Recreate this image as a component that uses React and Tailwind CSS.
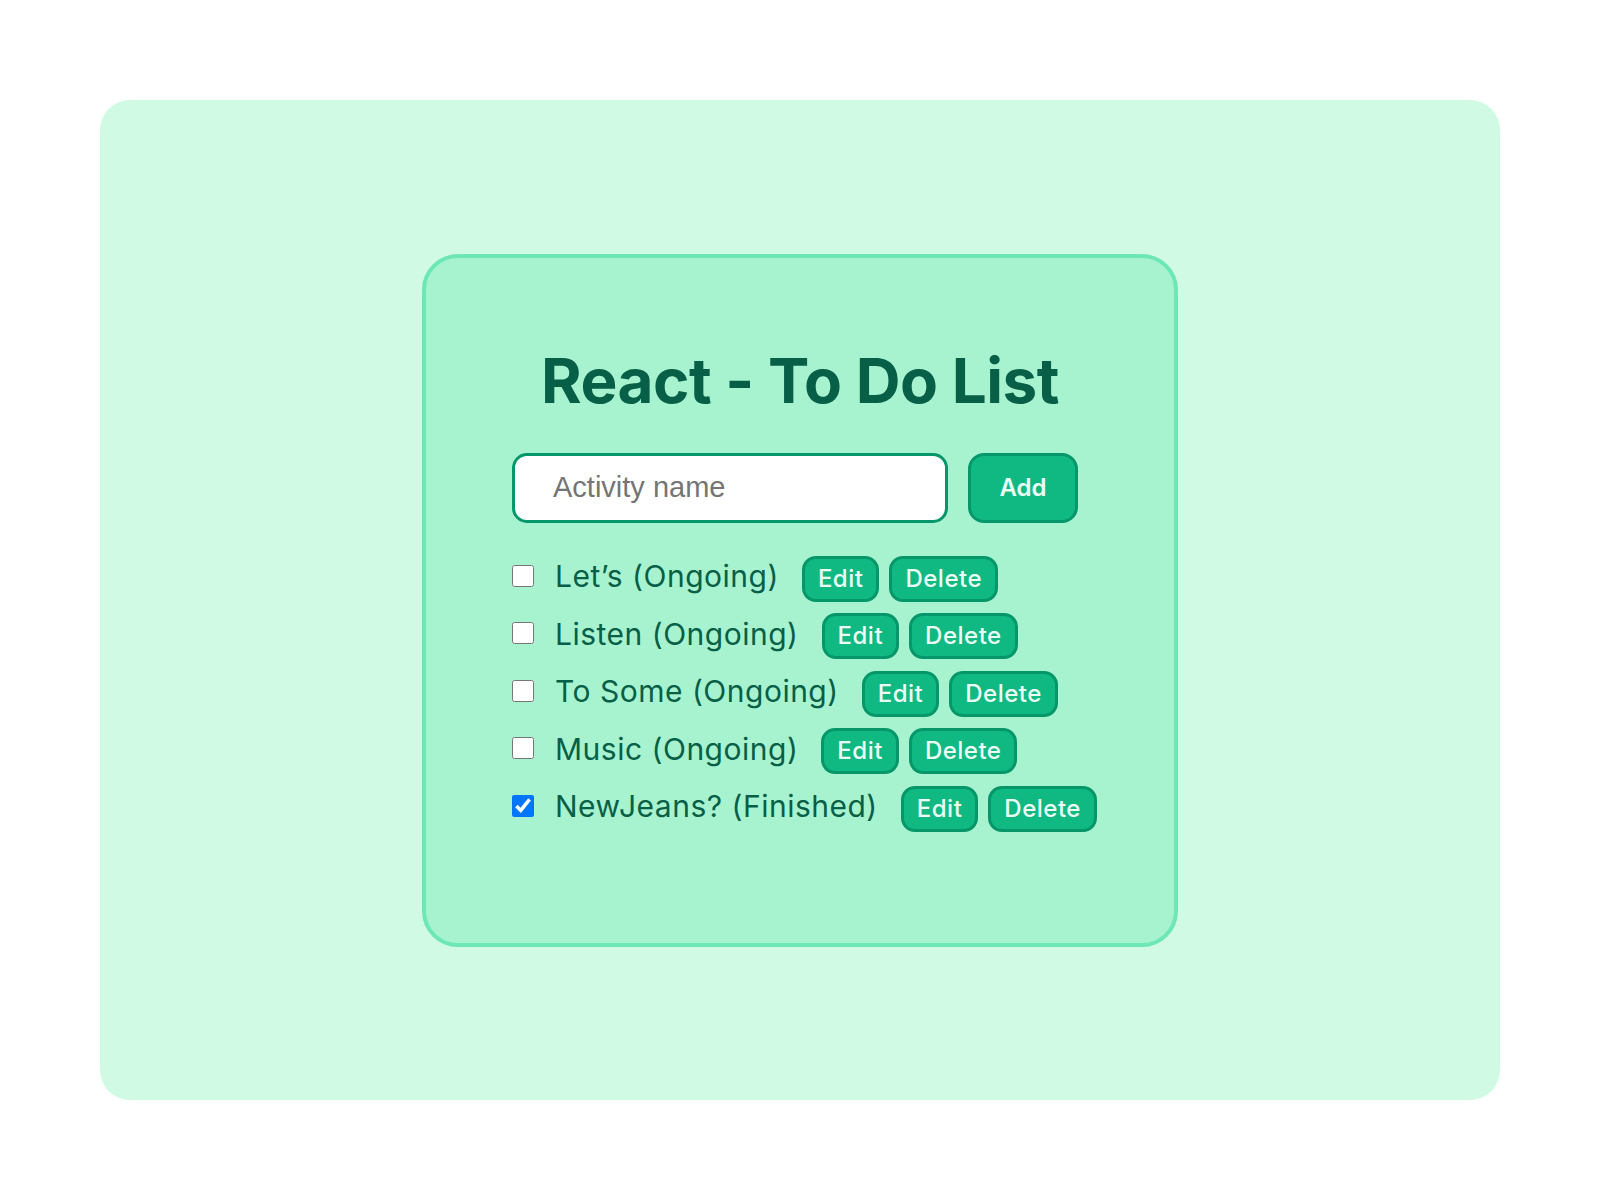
import React from "react";

const items = [
  { label: "Let’s (Ongoing)", done: false },
  { label: "Listen (Ongoing)", done: false },
  { label: "To Some (Ongoing)", done: false },
  { label: "Music (Ongoing)", done: false },
  { label: "NewJeans? (Finished)", done: true },
];

export default function App() {
  return (
    <div className="w-[1600px] h-[1200px] bg-white p-[100px] font-['Inter',sans-serif]">
      <div className="h-full w-full rounded-[30px] bg-[#d1fae5] flex items-center justify-center">
        <div className="w-[756px] h-[693px] rounded-[36px] border-4 border-[#6ee7b7] bg-[#a7f3d0] flex flex-col pt-[92px]">
          <h1 className="self-center text-[62px] leading-none font-bold text-[#065f46] tracking-[-0.5px]">
            React - To Do List
          </h1>
          <div className="pl-[86px] mt-[41px] flex flex-col">
            <div className="flex gap-[20px] h-[70px]">
              <input
                type="text"
                placeholder="Activity name"
                className="w-[436px] h-[70px] rounded-[15px] border-[3px] border-[#059669] bg-white pl-[38px] text-[29px] font-['Liberation_Sans',Arial,sans-serif] placeholder:text-[#757575] outline-none"
              />
              <button className="w-[110px] h-[70px] rounded-[16px] border-[3px] border-[#059669] bg-[#10b981] text-[#ecfdf5] text-[24px] font-semibold">
                Add
              </button>
            </div>
            <ul className="mt-[33px] flex flex-col gap-[11.5px]">
              {items.map((it, i) => (
                <li key={i} className="flex items-center h-[46px]">
                  <input
                    type="checkbox"
                    defaultChecked={it.done}
                    className="w-[22px] h-[22px] m-0 mb-[6px] shrink-0"
                  />
                  <span className="ml-[21px] mb-[4px] text-[30px] tracking-[0.5px] text-[#065f46] whitespace-nowrap">
                    {it.label}
                  </span>
                  <button className="ml-[23px] h-[46px] px-[13px] rounded-[14px] border-[3px] border-[#059669] bg-[#10b981] text-[#ecfdf5] text-[24px] tracking-[0.5px] font-medium">
                    Edit
                  </button>
                  <button className="ml-[10px] h-[46px] px-[13px] rounded-[14px] border-[3px] border-[#059669] bg-[#10b981] text-[#ecfdf5] text-[24px] tracking-[0.5px] font-medium">
                    Delete
                  </button>
                </li>
              ))}
            </ul>
          </div>
        </div>
      </div>
    </div>
  );
}
